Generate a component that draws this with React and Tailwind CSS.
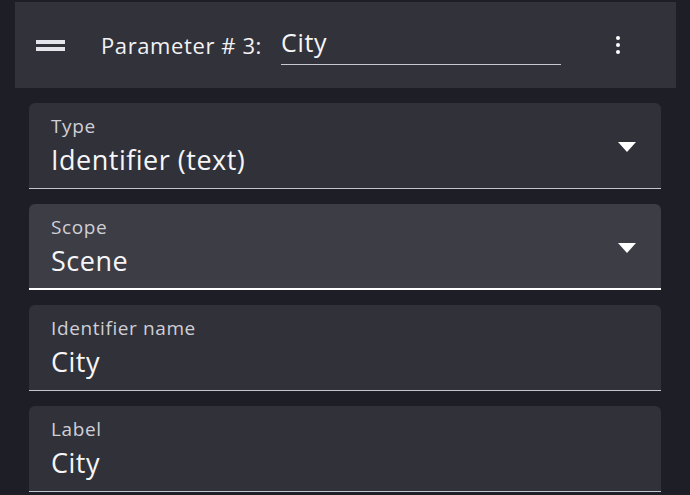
import React from 'react';

const font = { fontFamily: '"Open Sans", "Noto Sans", sans-serif' };

const Caret = () => (
  <svg width="18" height="10" viewBox="0 0 18 10" className="shrink-0 mt-[3px]">
    <path d="M0 0 L18 0 L9 10 Z" fill="#ffffff" />
  </svg>
);

const Field = ({ label, value, select, focused }) => (
  <div
    className={`h-[86px] rounded-t-[6px] flex pl-[22px] pr-[25px] ${
      focused ? 'bg-[#3d3d46] border-b-2 border-white' : 'bg-[#31313a] border-b border-[#c4c4cc]'
    }`}
  >
    <div className="flex-1 flex flex-col pt-[10.5px]">
      <span className="text-[19px] leading-[24px] tracking-[0.6px] text-[#cfcfd6]">{label}</span>
      <span className="text-[27px] leading-[34px] tracking-[0.5px] text-[#f6f6f8] mt-[5px]">{value}</span>
    </div>
    {select && (
      <div className="flex items-center">
        <Caret />
      </div>
    )}
  </div>
);

export default function App() {
  return (
    <div className="min-h-screen bg-[#1e1e26] pt-[2px] overflow-hidden" style={font}>
      {/* header row */}
      <div className="ml-[15px] w-[661px] h-[86px] bg-[#32323a] flex items-center pl-[21px] pr-[56px]">
        <div className="flex flex-col gap-[3px] w-[29px] mt-[1px]">
          <span className="h-[4px] bg-[#e4e4ea]" />
          <span className="h-[4px] bg-[#e4e4ea]" />
        </div>
        <span className="ml-[36px] text-[22px] tracking-[0.6px] text-[#f2f2f5] whitespace-nowrap">Parameter # 3:</span>
        <div className="ml-[19px] w-[280px] border-b-[1.5px] border-[#c8c8d2] pb-[5px]">
          <span className="block text-[25px] leading-[34px] tracking-[0.7px] text-[#f6f6f8]">City</span>
        </div>
        <div className="ml-auto flex flex-col gap-[3px]">
          <span className="w-[4px] h-[4px] rounded-full bg-white" />
          <span className="w-[4px] h-[4px] rounded-full bg-white" />
          <span className="w-[4px] h-[4px] rounded-full bg-white" />
        </div>
      </div>

      {/* fields */}
      <div className="mx-[29px] mt-[15px] flex flex-col gap-[15px]">
        <Field label="Type" value="Identifier (text)" select />
        <Field label="Scope" value="Scene" select focused />
        <Field label="Identifier name" value="City" />
        <Field label="Label" value="City" />
      </div>
    </div>
  );
}
